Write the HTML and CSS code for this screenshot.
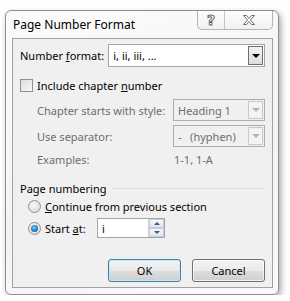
FILE: index.html
```html
<!DOCTYPE html>
<html lang="en">
<head>
	<meta charset="utf-8"/>
	<title>Page Number Format</title>
	<link rel="stylesheet" href="styles.css">
</head>
<body>

<div class="dialog">
	<div class="titlebar">
		<span class="title">Page Number Format</span>
		<div class="caption">
			<span class="cap-btn help">?</span>
			<span class="cap-btn close">
				<svg width="14" height="12" viewBox="0 0 14 12">
					<path d="M1.5 1.5h3l2.5 3 2.5-3h3l-4 4.5 4 4.5h-3l-2.5-3-2.5 3h-3l4-4.5z" fill="#fff" stroke="#6a6a6a" stroke-width="1"/>
				</svg>
			</span>
		</div>
	</div>

	<div class="client">
		<div class="row format">
			<span class="label">Number <u>f</u>ormat:</span>
			<div class="combo">
				<span class="value">i, ii, iii, ...</span>
				<span class="drop"><span class="arrow"></span></span>
			</div>
		</div>

		<div class="check-row">
			<span class="checkbox"></span>
			<span>Include chapter <u>n</u>umber</span>
		</div>

		<div class="chapter">
			<span class="label">Chapter starts with style:</span>
			<div class="combo disabled">
				<span class="value">Heading 1</span>
				<span class="drop"><span class="arrow"></span></span>
			</div>
			<span class="label">Use separator:</span>
			<div class="combo disabled">
				<span class="value">-&nbsp;&nbsp;&nbsp;(hyphen)</span>
				<span class="drop"><span class="arrow"></span></span>
			</div>
			<span class="label">Examples:</span>
			<span class="example">1-1, 1-A</span>
		</div>

		<div class="group-title">
			<span>Page numbering</span>
			<span class="line"></span>
		</div>

		<div class="radio-row first">
			<span class="radio"></span>
			<span><u>C</u>ontinue from previous section</span>
		</div>
		<div class="radio-row">
			<span class="radio checked"></span>
			<span class="start-label">Start <u>a</u>t:</span>
			<div class="spinner">
				<span class="value">i</span>
				<span class="spin">
					<span class="spin-btn"><span class="up"></span></span>
					<span class="spin-btn"><span class="down"></span></span>
				</span>
			</div>
		</div>

		<div class="buttons">
			<span class="button default">OK</span>
			<span class="button">Cancel</span>
		</div>
	</div>
</div>

</body>
</html>
```

FILE: styles.css
```css
body {
	background: #fff;
	color: #000;
	font: 11px 'Noto Sans', 'Open Sans', sans-serif;
	margin: 0;
	padding: 0;
}

u {
	text-decoration: underline;
	text-underline-offset: 1px;
}

.dialog {
	width: 272px;
	height: 283px;
	margin: 10px 0 0 5px;
	border: 1px solid #8e8e8e;
	border-radius: 6px;
	background: linear-gradient(160deg, #fbfbfb 0%, #f4f4f4 60%, #fafafa 100%);
	box-shadow: 2px 3px 6px rgba(0, 0, 0, 0.35);
	display: flex;
	flex-direction: column;
}

.titlebar {
	height: 27px;
	display: flex;
	justify-content: space-between;
	align-items: flex-start;
	flex-shrink: 0;
}

.title {
	font-size: 12px;
	padding: 5px 0 0 7px;
	color: #000;
}

.caption {
	display: flex;
	margin-right: 5px;
	border: 1px solid #b4b4b4;
	border-top: none;
	border-radius: 0 0 5px 5px;
	height: 18px;
	background: linear-gradient(#fdfdfd, #f1f1f1);
}

.cap-btn {
	display: flex;
	align-items: center;
	justify-content: center;
}

.help {
	width: 26px;
	border-right: 1px solid #c4c4c4;
	font: bold 14px 'DejaVu Sans', sans-serif;
	color: #fff;
	-webkit-text-stroke: 1px #6a6a6a;
}

.close {
	width: 47px;
}

.client {
	flex: 1;
	margin: 0 5px 6px 6px;
	border: 1px solid #a0a0a0;
	background: #f0f0f0;
	padding: 5px 7px 0 7px;
}

.row {
	display: flex;
	align-items: center;
}

.format .label {
	width: 89px;
}

.combo {
	display: flex;
	align-items: center;
	justify-content: space-between;
	border: 1px solid #a5a5a5;
	background: #fff;
	height: 21px;
	padding: 0 1px 0 4px;
}

.format .combo {
	width: 151px;
}

.drop {
	width: 13px;
	height: 17px;
	border: 1px solid #6f6f6f;
	background: linear-gradient(#f3f3f3, #dcdcdc);
	display: flex;
	align-items: center;
	justify-content: center;
}

.arrow {
	width: 0;
	height: 0;
	border-left: 4px solid transparent;
	border-right: 4px solid transparent;
	border-top: 4px solid #000;
}

.combo.disabled {
	background: #f0f0f0;
	border-color: #adadad;
	color: #6d6d6d;
	height: 20px;
}

.combo.disabled .drop {
	border-color: #c9c9c9;
	background: #f4f4f4;
	height: 16px;
}

.combo.disabled .arrow {
	border-top-color: #b4b4b4;
}

.check-row {
	display: flex;
	align-items: center;
	gap: 4px;
	margin-top: 11px;
	height: 14px;
}

.checkbox {
	width: 11px;
	height: 11px;
	border: 1px solid #8e8f8f;
	background: linear-gradient(135deg, #dedede, #f8f8f8);
}

.chapter {
	display: grid;
	grid-template-columns: 136px 92px;
	grid-template-rows: 22px 22px 16px;
	row-gap: 4px;
	align-items: center;
	margin: 7px 0 0 17px;
	color: #6d6d6d;
}

.example {
	padding-left: 1px;
}

.group-title {
	display: flex;
	align-items: center;
	margin-top: 14px;
	height: 14px;
}

.group-title .line {
	flex: 1;
	height: 1px;
	background: #dcdcdc;
	margin: 0 0 0 6px;
}

.radio-row {
	display: flex;
	align-items: center;
	gap: 4px;
	padding-left: 8px;
	height: 20px;
}

.radio-row.first {
	margin-top: 4px;
	height: 14px;
	margin-bottom: 5px;
}

.radio {
	width: 11px;
	height: 11px;
	border: 1px solid #8e8f8f;
	border-radius: 50%;
	background: radial-gradient(circle at 40% 40%, #f8f8f8, #d4d4d4);
	position: relative;
}

.radio.checked::after {
	content: '';
	position: absolute;
	left: 2px;
	top: 2px;
	width: 7px;
	height: 7px;
	border-radius: 50%;
	background: radial-gradient(circle at 45% 40%, #7fd0f5 0%, #2a8ccf 45%, #0f3f7a 100%);
}

.start-label {
	width: 48px;
}

.spinner {
	display: flex;
	justify-content: space-between;
	align-items: center;
	width: 62px;
	height: 18px;
	border: 1px solid #a5a5a5;
	background: #fff;
	padding-left: 4px;
}

.spin {
	display: flex;
	flex-direction: column;
	width: 15px;
	height: 18px;
	border-left: 1px solid #d4d4d4;
}

.spin-btn {
	flex: 1;
	display: flex;
	align-items: center;
	justify-content: center;
	background: linear-gradient(#f5f7fa, #dfe4ec);
	border: 1px solid #c4ccd8;
}

.up, .down {
	width: 0;
	height: 0;
	border-left: 3px solid transparent;
	border-right: 3px solid transparent;
}

.up {
	border-bottom: 3px solid #3e5a8c;
}

.down {
	border-top: 3px solid #3e5a8c;
}

.buttons {
	display: flex;
	justify-content: flex-end;
	gap: 11px;
	margin-top: 21px;
}

.button {
	width: 71px;
	height: 21px;
	display: flex;
	align-items: center;
	justify-content: center;
	border: 1px solid #707070;
	border-radius: 3px;
	background: linear-gradient(#f2f2f2 0%, #ebebeb 50%, #dddddd 51%, #cfcfcf 100%);
	box-shadow: inset 0 0 0 1px rgba(255, 255, 255, 0.7);
}

.button.default {
	border-color: #3c7fb1;
	box-shadow: inset 0 0 0 1px #c8e6f8;
}
```
